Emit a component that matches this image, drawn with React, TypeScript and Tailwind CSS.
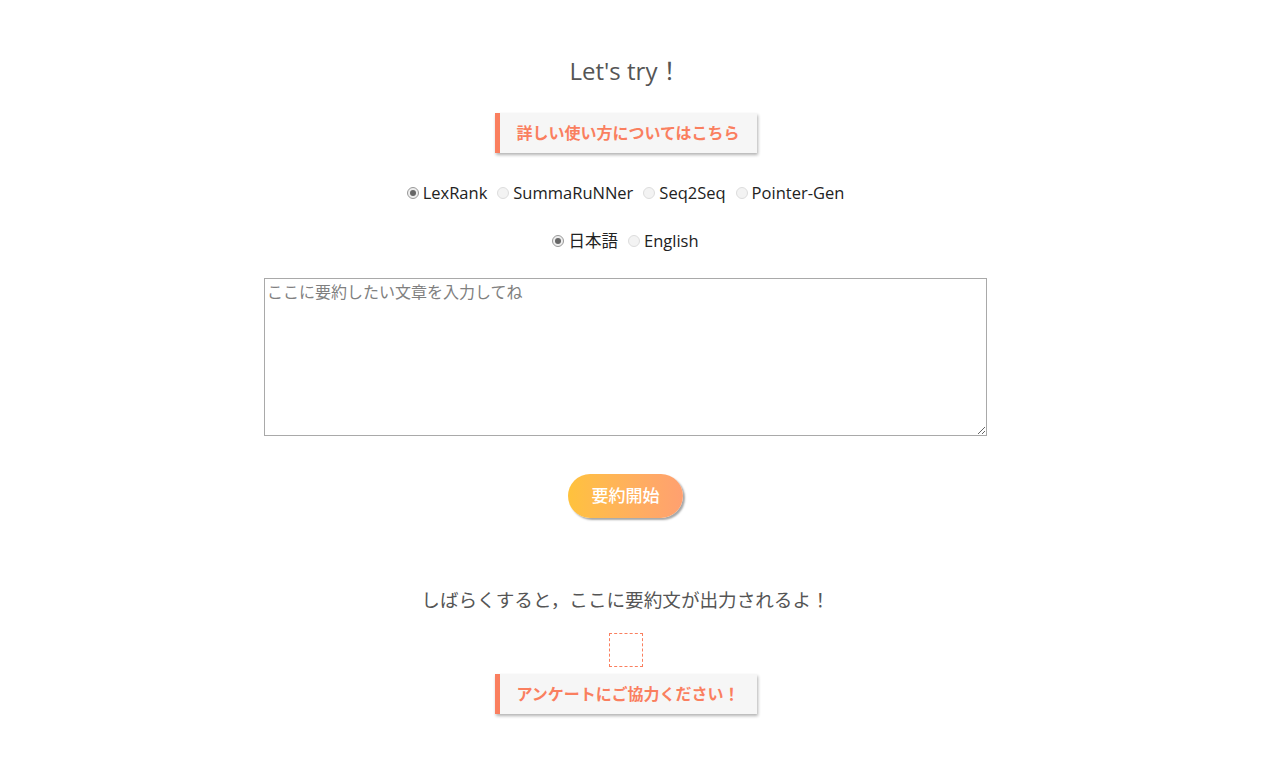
import React from "react";

const font = {
  fontFamily: '"Open Sans", "Noto Sans CJK JP", sans-serif',
};

interface LinkButtonProps {
  label: string;
}

const LinkButton = ({ label }: LinkButtonProps) => {
  return (
    <a className="flex items-center justify-center w-[262px] h-[40px] bg-[#f6f6f6] border-l-[5px] border-[#fa7f5f] shadow-[1px_2px_3px_rgba(0,0,0,0.3)] text-[16px] font-bold text-[#fa7f5f] cursor-pointer">
      {label}
    </a>
  );
};

interface RadioProps {
  name: string;
  label: string;
  checked?: boolean;
}

const Radio = ({ name, label, checked }: RadioProps) => {
  return (
    <label className="flex items-center gap-[4px] text-[16.5px] text-[#222]">
      {/* tiny grey radio like the old browser default */}
      <span
        className={
          "w-[12px] h-[12px] rounded-full border flex items-center justify-center " +
          (checked ? "border-[#999] bg-[#eee]" : "border-[#ddd] bg-[#f3f3f3]")
        }
      >
        {checked && <span className="w-[6px] h-[6px] rounded-full bg-[#666]" />}
      </span>
      <input type="radio" name={name} defaultChecked={checked} className="hidden" />
      {label}
    </label>
  );
};

export default function App() {
  return (
    <div className="min-h-[774px] bg-white pr-[27px]" style={font}>
      <div className="flex flex-col items-center pt-[55px]">
        {/* Title */}
        <h2 className="text-[24px] leading-[32px] text-[#555]">Let's try！</h2>

        <div className="mt-[26px]">
          <LinkButton label="詳しい使い方についてはこちら" />
        </div>

        {/* Model select */}
        <div className="mt-[28px] flex items-center gap-[10px] h-[24px]">
          <Radio name="model" label="LexRank" checked />
          <Radio name="model" label="SummaRuNNer" />
          <Radio name="model" label="Seq2Seq" />
          <Radio name="model" label="Pointer-Gen" />
        </div>

        {/* Language select */}
        <div className="mt-[24px] flex items-center gap-[10px] h-[24px]">
          <Radio name="lang" label="日本語" checked />
          <Radio name="lang" label="English" />
        </div>

        {/* Input */}
        <textarea
          className="mt-[25px] w-[723px] h-[158px] border border-[#a9a9a9] px-[2px] py-[1px] text-[16px] text-[#333] placeholder:text-[#808080] outline-none"
          placeholder="ここに要約したい文章を入力してね"
          style={font}
        />

        {/* Submit */}
        <button className="mt-[38px] w-[115px] h-[44px] rounded-full bg-gradient-to-r from-[#ffc23c] to-[#ffa070] text-white text-[17px] font-medium shadow-[2px_2px_2px_rgba(0,0,0,0.35)]">
          要約開始
        </button>

        {/* Output */}
        <p className="mt-[69px] text-[18.6px] leading-[26px] text-[#555]">
          しばらくすると，ここに要約文が出力されるよ！
        </p>

        <div className="mt-[20px] w-[34px] h-[34px] border border-dashed border-[#fa7f5f]" />

        <div className="mt-[7px]">
          <LinkButton label="アンケートにご協力ください！" />
        </div>
      </div>
    </div>
  );
}
